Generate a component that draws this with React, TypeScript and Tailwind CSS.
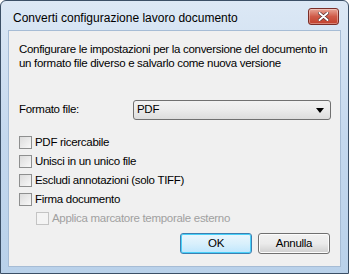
import { useState } from "react";

const font = { fontFamily: '"Liberation Sans", Arial, sans-serif' };

function Check({ label, disabled, indent }: { label: string; disabled?: boolean; indent?: boolean }) {
  const [on, setOn] = useState(false);
  return (
    <label
      className={`flex h-[19px] items-center gap-[3px] ${indent ? "pl-[27px]" : "pl-[10px]"} ${
        disabled ? "text-[#a0a0a0]" : "text-black"
      }`}
    >
      <span
        onClick={() => !disabled && setOn(!on)}
        className={`flex h-[13px] w-[13px] items-center justify-center border ${
          disabled
            ? "border-[#c4c4c4] bg-[#f4f4f4]"
            : "border-[#8e8f8f] bg-gradient-to-br from-[#dcdcdc] to-[#f8f8f8]"
        }`}
      >
        {on && <span className="text-[10px] leading-none">✓</span>}
      </span>
      <span>{label}</span>
    </label>
  );
}

export default function App() {
  return (
    <div
      style={font}
      className="relative flex h-[274px] w-[349px] flex-col overflow-hidden rounded-t-[6px] border border-[#3b4f66] bg-gradient-to-b from-[#dce8f5] via-[#c4d8ee] to-[#b9d1ea] text-[11.5px] tracking-[-0.3px] whitespace-nowrap"
    >
      {/* title bar */}
      <div className="flex h-[29px] items-center justify-between pl-[12px] pr-[9px]">
        <span className="pt-[5px] text-[12px] tracking-normal text-black">
          Converti configurazione lavoro documento
        </span>
        <button className="mt-[1px] flex h-[17px] w-[31px] items-center justify-center rounded-[3px] border border-[#7a2e28] bg-gradient-to-b from-[#e7a597] via-[#cf5a48] to-[#c2402c] shadow-[inset_0_0_0_1px_rgba(255,255,255,0.35)]">
          <svg width="11" height="9" viewBox="0 0 11 9">
            <path
              d="M1.5 1 L9.5 8 M9.5 1 L1.5 8"
              stroke="#4a2a2a"
              strokeWidth="3.2"
              strokeLinecap="round"
            />
            <path
              d="M1.5 1 L9.5 8 M9.5 1 L1.5 8"
              stroke="#ffffff"
              strokeWidth="2"
              strokeLinecap="round"
            />
          </svg>
        </button>
      </div>

      {/* client area */}
      <div className="mx-[7px] mb-[6px] flex flex-1 flex-col border border-[#a6bcd5] bg-[#f0f0f0] text-black">
        <div className="pl-[10px] pt-[11px] leading-[14px]">
          Configurare le impostazioni per la conversione del documento in
          <br />
          un formato file diverso e salvarlo come nuova versione
        </div>

        <div className="mt-[30px] flex items-center">
          <span className="w-[124px] pl-[10px]">Formato file:</span>
          <div className="flex h-[20px] w-[198px] items-center justify-between rounded-[3px] border border-[#707070] bg-gradient-to-b from-[#f2f2f2] via-[#ebebeb] to-[#dddddd] pl-[3px] pr-[6px]">
            <span>PDF</span>
            <svg width="8" height="5" viewBox="0 0 8 5">
              <path d="M0 0 H8 L4 5 Z" fill="#000" />
            </svg>
          </div>
        </div>

        <div className="mt-[13px] flex flex-col">
          <Check label="PDF ricercabile" />
          <Check label="Unisci in un unico file" />
          <Check label="Escludi annotazioni (solo TIFF)" />
          <Check label="Firma documento" />
          <Check label="Applica marcatore temporale esterno" disabled indent />
        </div>

        <div className="mt-[5px] flex justify-end gap-[6px] pr-[10px]">
          <button className="h-[21px] w-[72px] rounded-[3px] border border-[#3c7fb1] bg-gradient-to-b from-[#eaf6fd] via-[#d9f0fc] to-[#bee6fd] shadow-[inset_0_0_0_1px_#48d0f9]">
            OK
          </button>
          <button className="h-[21px] w-[72px] rounded-[3px] border border-[#707070] bg-gradient-to-b from-[#f2f2f2] via-[#ebebeb] to-[#cfcfcf] shadow-[inset_0_0_0_1px_#fcfcfc]">
            Annulla
          </button>
        </div>
      </div>
    </div>
  );
}
